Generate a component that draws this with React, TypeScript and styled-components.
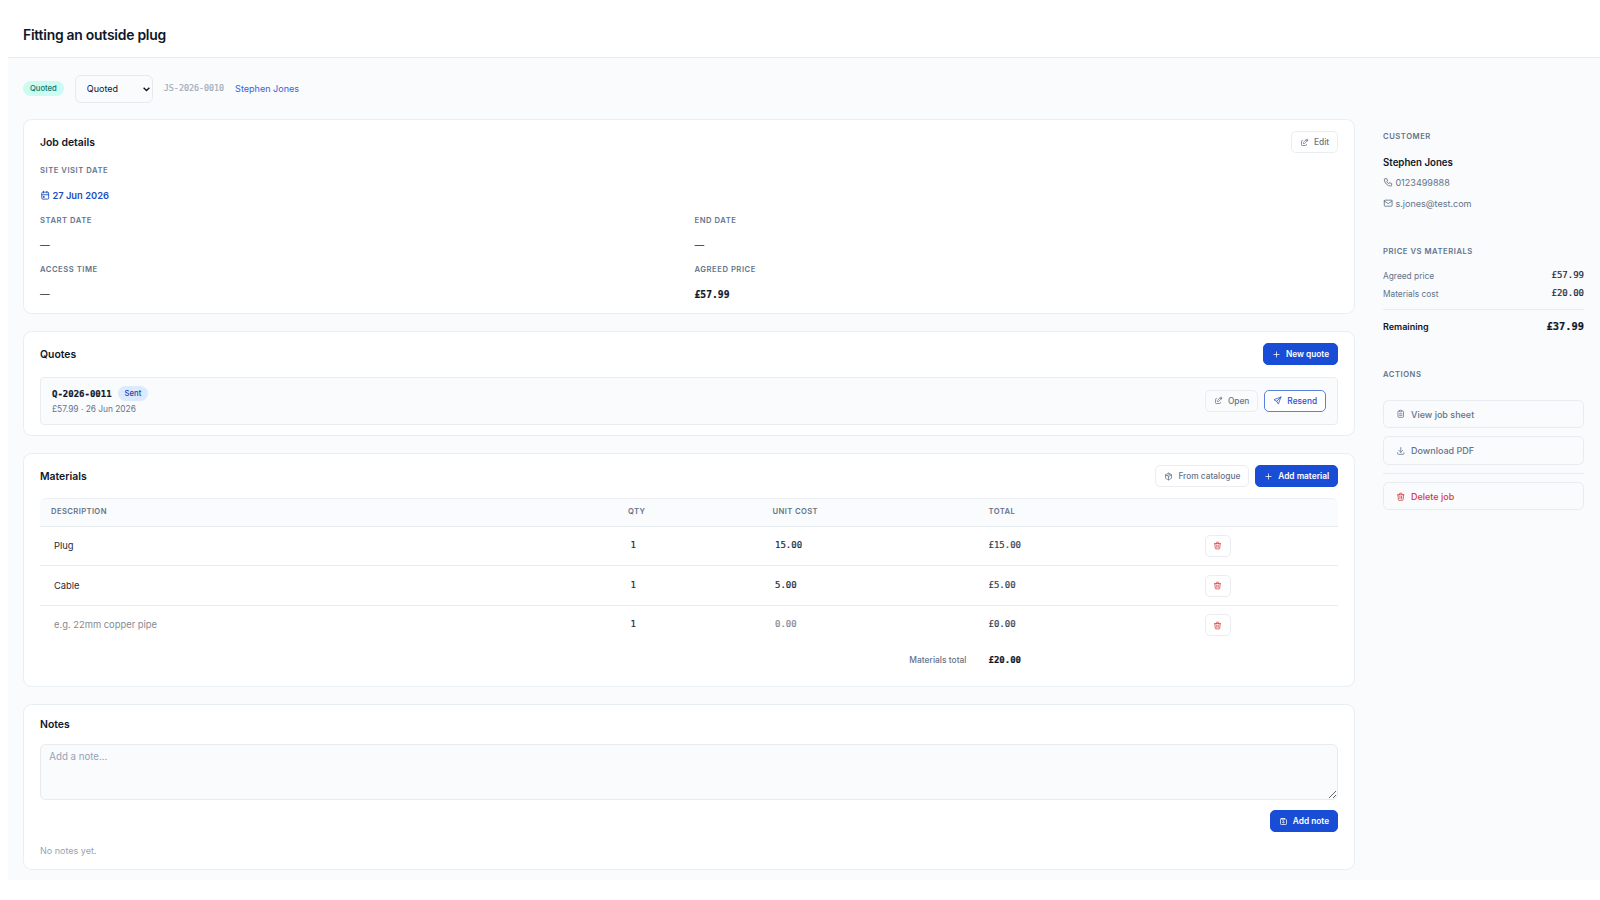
import React from "react";
import styled, { createGlobalStyle, css } from "styled-components";
import {
  TbCalendarEvent,
  TbClipboardText,
  TbDeviceFloppy,
  TbDownload,
  TbEdit,
  TbMail,
  TbPackage,
  TbPhone,
  TbPlus,
  TbSend,
  TbTrash,
} from "react-icons/tb";

const GlobalStyle = createGlobalStyle`
  *, *::before, *::after { box-sizing: border-box; }
  body {
    margin: 0;
    background: #fff;
    color: #0f172a;
    font-family: Inter, "Liberation Sans", sans-serif;
    font-size: 9px;
  }
  button, input, select, textarea { font-family: inherit; }
  svg { flex: none; display: block; }
`;

const mono = css`
  font-family: "DejaVu Sans Mono", "Liberation Mono", monospace;
  -webkit-text-stroke: 0.2px currentColor;
`;

const Page = styled.div`
  margin-left: 8px;
  height: 880px;
  background: #f9fbfd;
`;

const TopBar = styled.header`
  height: 58px;
  padding: 13px 15px 0;
  display: flex;
  align-items: center;
  background: #fff;
  border-bottom: 1px solid #e8ecf1;
`;

const PageTitle = styled.h1`
  margin: 0;
  font-size: 13.9px;
  font-weight: 600;
  letter-spacing: -0.017em;
`;

const StatusRow = styled.div`
  height: 61px;
  padding: 0 15px;
  display: flex;
  align-items: center;
  gap: 11px;
`;

const Badge = styled.span<{ $tone: "teal" | "blue" }>`
  height: 15.5px;
  padding: 0 7px;
  display: inline-flex;
  align-items: center;
  border-radius: 8px;
  font-size: 7.65px;
  font-weight: 500;
  background: ${(p) => (p.$tone === "teal" ? "#ccfbf1" : "#dbeafe")};
  color: ${(p) => (p.$tone === "teal" ? "#0f766e" : "#1e40af")};
`;

const SelectWrap = styled.div`
  position: relative;
  width: 78px;
  height: 28px;

  svg {
    position: absolute;
    right: 3px;
    top: 12px;
    pointer-events: none;
  }
`;

const Select = styled.select`
  width: 100%;
  height: 100%;
  padding: 0 11px;
  appearance: none;
  border: 1px solid #e6eaef;
  border-radius: 6px;
  background: #fafbfd;
  color: #0f172a;
  font-size: 9px;
`;

const JobRef = styled.span`
  ${mono}
  margin-bottom: 2px;
  font-size: 8.35px;
  color: #a3adba;
`;

const CustomerLink = styled.a`
  color: #3b62d6;
  font-size: 9.05px;
`;

const Body = styled.div`
  padding-left: 15px;
  display: grid;
  grid-template-columns: 1332px 201px;
  column-gap: 28px;
`;

const Main = styled.main`
  display: flex;
  flex-direction: column;
  gap: 17px;
`;

const Card = styled.section<{ $height: number }>`
  height: ${(p) => p.$height}px;
  padding: 11px 16px 0;
  border: 1px solid #e9eef3;
  border-radius: 8.5px;
  background: #fff;
`;

const CardHead = styled.div<{ $height?: number }>`
  height: ${(p) => p.$height ?? 22}px;
  display: flex;
  align-items: center;
  justify-content: space-between;
`;

const CardTitle = styled.h2`
  margin: 0;
  font-size: 10.4px;
  font-weight: 600;
`;

const ButtonGroup = styled.div`
  display: flex;
  gap: 6px;
`;

const variants = {
  ghost: css`
    background: #fff;
    border-color: #eaeef3;
    color: #64748b;
  `,
  soft: css`
    background: #fafbfd;
    border-color: #e9edf2;
    color: #64748b;
  `,
  primary: css`
    background: #1a4dd6;
    border-color: #1a4dd6;
    color: #fff;
    font-weight: 600;
    font-size: 8.3px;
  `,
  outline: css`
    background: #fff;
    border-color: #5b7fdc;
    color: #1d4ed8;
  `,
};

const Button = styled.button<{ $variant: keyof typeof variants }>`
  height: 22px;
  padding: 0 7.9px;
  display: inline-flex;
  align-items: center;
  gap: 5.2px;
  border: 1px solid;
  border-radius: 5px;
  font-size: 8.35px;
  font-weight: 500;
  white-space: nowrap;
  ${(p) => variants[p.$variant]}

  svg {
    width: 9px;
    height: 9px;
  }
`;

const DeleteButton = styled(Button)`
  width: 26px;
  padding: 0;
  justify-content: center;
  color: #d83a3a;
`;

const Label = styled.div`
  height: 14px;
  line-height: 14px;
  font-size: 7.65px;
  font-weight: 600;
  letter-spacing: 0.07em;
  text-transform: uppercase;
  color: #64748b;
`;

const DetailGrid = styled.div`
  margin-top: 11px;
  display: grid;
  grid-template-columns: 654.5px 1fr;
  grid-auto-rows: 49.5px;
`;

const Detail = styled.div<{ $wide?: boolean }>`
  grid-column: ${(p) => (p.$wide ? "1 / -1" : "auto")};
`;

const DetailValue = styled.div`
  margin-top: 10px;
  height: 15px;
  display: flex;
  align-items: center;
  font-size: 9.7px;
  color: #1e293b;
`;

const VisitDate = styled(DetailValue)`
  gap: 2px;
  font-size: 9.35px;
  font-weight: 600;
  color: #1d4ebf;

  svg { width: 10.4px; height: 10.4px; }
`;

const AgreedPrice = styled(DetailValue)`
  ${mono}
  font-weight: 700;
  color: #0f172a;
`;

const QuoteItem = styled.div`
  margin-top: 11.5px;
  height: 48px;
  padding: 0 11px;
  display: flex;
  align-items: center;
  justify-content: space-between;
  border: 1px solid #e9edf2;
  border-radius: 4px;
  background: #f9fbfd;
`;

const QuoteTop = styled.div`
  display: flex;
  align-items: center;
  gap: 6px;
`;

const QuoteNumber = styled.span`
  ${mono}
  font-size: 9px;
  font-weight: 700;
`;

const QuoteMeta = styled.div`
  margin-top: 2px;
  line-height: 12px;
  font-size: 8.35px;
  color: #64748b;
`;

const columns = css`
  display: grid;
  grid-template-columns: 577px 144.5px 216px 216px 1fr;
  align-items: center;
`;

const TableHead = styled.div`
  ${columns}
  margin-top: 11px;
  height: 28.5px;
  padding-bottom: 1px;
  border-top: 1px solid #eceff3;
  border-bottom: 1px solid #e6ebf0;
  border-radius: 7px 7px 0 0;
  background: #f9fbfd;
`;

const HeadCell = styled.div`
  padding-left: 11px;
  font-size: 7.65px;
  font-weight: 600;
  letter-spacing: 0.05em;
  color: #64748b;
`;

const TableRow = styled.div<{ $last?: boolean }>`
  ${columns}
  height: 39.7px;
  border-bottom: 1px solid ${(p) => (p.$last ? "transparent" : "#e8ecf1")};
`;

const Cell = styled.div`
  padding-left: 11px;
`;

const CellInput = styled.input<{ $mono?: boolean }>`
  width: 80%;
  padding: 0;
  margin: 0 0 ${(p) => (p.$mono ? 1.5 : 1)}px ${(p) => (p.$mono ? 2.5 : 3)}px;
  display: block;
  border: 0;
  outline: 0;
  background: transparent;
  color: #1e293b;
  font-size: ${(p) => (p.$mono ? 9 : 9.4)}px;
  ${(p) => p.$mono && mono}

  &::placeholder { color: #858a92; opacity: 1; }
`;

const Amount = styled.div`
  ${mono}
  padding: 0 0 1.5px 11px;
  font-size: 9px;
  color: #334155;
`;

const TotalRow = styled.div`
  ${columns}
  height: 28.5px;
`;

const TotalLabel = styled.div`
  grid-column: 1 / 4;
  padding-right: 11px;
  text-align: right;
  font-size: 8.45px;
  font-weight: 500;
  color: #64748b;
`;

const TotalAmount = styled(Amount)`
  padding-bottom: 0;
  font-weight: 700;
  color: #0f172a;
`;

const NoteArea = styled.textarea`
  display: block;
  margin-top: 11px;
  width: 100%;
  height: 56px;
  padding: 5px 8.3px;
  border: 1px solid #e6ebf0;
  border-radius: 6px;
  outline: 0;
  resize: vertical;
  background: #f9fbfd;
  font-size: 9.7px;
  line-height: 13px;

  &::placeholder { color: #94a3b8; opacity: 1; }
`;

const NoteActions = styled.div`
  margin-top: 10px;
  display: flex;
  justify-content: flex-end;
`;

const EmptyNotes = styled.p`
  margin: 12px 0 0;
  line-height: 14px;
  font-size: 9px;
  color: #94a3b8;
`;

const Sidebar = styled.aside`
  padding-top: 11px;
`;

const SideSection = styled.section<{ $height: number }>`
  height: ${(p) => p.$height}px;
`;

const CustomerName = styled.div`
  margin-top: 10.5px;
  line-height: 16px;
  font-size: 9.7px;
  font-weight: 600;
`;

const Contact = styled.div`
  height: 21.2px;
  display: flex;
  align-items: center;
  gap: 2px;
  font-size: 9.05px;
  color: #64748b;

  svg { width: 10.4px; height: 10.4px; margin-top: -1px; }
`;

const Contacts = styled.div`
  margin-top: 1.5px;
`;

const PriceList = styled.div`
  margin: 8px 0 6.5px;
`;

const PriceLine = styled.div`
  height: 17.7px;
  display: flex;
  align-items: center;
  justify-content: space-between;
  font-size: 8.35px;
  color: #64748b;
`;

const PriceValue = styled.span`
  ${mono}
  font-size: 9px;
  color: #1e293b;
  padding-bottom: 1.5px;
`;

const Rule = styled.div`
  height: 1px;
  background: #e8ecf1;
`;

const Remaining = styled.div`
  height: 34px;
  display: flex;
  align-items: center;
  justify-content: space-between;
  font-weight: 600;
  font-size: 9px;
`;

const RemainingValue = styled.span`
  ${mono}
  padding-bottom: 1.5px;
  font-size: 10.4px;
  font-weight: 700;
`;

const ActionList = styled.div`
  margin-top: 18.5px;
  display: flex;
  flex-direction: column;
  gap: 8.3px;
`;

const ActionButton = styled.button<{ $danger?: boolean }>`
  height: 28.2px;
  padding: 0 12px;
  display: flex;
  align-items: center;
  gap: 5.5px;
  border: 1px solid #e8ecf1;
  border-radius: 5.5px;
  background: #fafbfd;
  font-size: 9px;
  font-weight: 500;
  color: ${(p) => (p.$danger ? "#d83a3a" : "#64748b")};

  svg { width: 9.5px; height: 9.5px; }
`;

type Material = { id: number; description: string; qty: string; cost: string; total: string };

const materials: Material[] = [
  { id: 1, description: "Plug", qty: "1", cost: "15.00", total: "£15.00" },
  { id: 2, description: "Cable", qty: "1", cost: "5.00", total: "£5.00" },
  { id: 3, description: "", qty: "1", cost: "", total: "£0.00" },
];

export default function App() {
  return (
    <>
      <GlobalStyle />
      <Page>
        <TopBar>
          <PageTitle>Fitting an outside plug</PageTitle>
        </TopBar>
        <StatusRow>
          <Badge $tone="teal">Quoted</Badge>
          <SelectWrap>
            <Select defaultValue="quoted">
              <option value="quoted">Quoted</option>
            </Select>
            <svg width="7" height="5" viewBox="0 0 7 5" fill="none" stroke="#0f172a" strokeWidth="1.4">
              <path d="M0.6 0.8 L3.5 3.6 L6.4 0.8" />
            </svg>
          </SelectWrap>
          <JobRef>JS-2026-0010</JobRef>
          <CustomerLink>Stephen Jones</CustomerLink>
        </StatusRow>
        <Body>
          <Main>
            <Card $height={195}>
              <CardHead>
                <CardTitle>Job details</CardTitle>
                <Button $variant="ghost"><TbEdit />Edit</Button>
              </CardHead>
              <DetailGrid>
                <Detail $wide>
                  <Label>Site visit date</Label>
                  <VisitDate><TbCalendarEvent />27 Jun 2026</VisitDate>
                </Detail>
                <Detail>
                  <Label>Start date</Label>
                  <DetailValue>—</DetailValue>
                </Detail>
                <Detail>
                  <Label>End date</Label>
                  <DetailValue>—</DetailValue>
                </Detail>
                <Detail>
                  <Label>Access time</Label>
                  <DetailValue>—</DetailValue>
                </Detail>
                <Detail>
                  <Label>Agreed price</Label>
                  <AgreedPrice>£57.99</AgreedPrice>
                </Detail>
              </DetailGrid>
            </Card>

            <Card $height={105}>
              <CardHead>
                <CardTitle>Quotes</CardTitle>
                <Button $variant="primary"><TbPlus />New quote</Button>
              </CardHead>
              <QuoteItem>
                <div>
                  <QuoteTop>
                    <QuoteNumber>Q-2026-0011</QuoteNumber>
                    <Badge $tone="blue">Sent</Badge>
                  </QuoteTop>
                  <QuoteMeta>£57.99 · 26 Jun 2026</QuoteMeta>
                </div>
                <ButtonGroup>
                  <Button $variant="soft"><TbEdit />Open</Button>
                  <Button $variant="outline"><TbSend />Resend</Button>
                </ButtonGroup>
              </QuoteItem>
            </Card>

            <Card $height={234}>
              <CardHead>
                <CardTitle>Materials</CardTitle>
                <ButtonGroup>
                  <Button $variant="ghost"><TbPackage />From catalogue</Button>
                  <Button $variant="primary"><TbPlus />Add material</Button>
                </ButtonGroup>
              </CardHead>
              <TableHead>
                <HeadCell>DESCRIPTION</HeadCell>
                <HeadCell>QTY</HeadCell>
                <HeadCell>UNIT COST</HeadCell>
                <HeadCell>TOTAL</HeadCell>
              </TableHead>
              {materials.map((m, i) => (
                <TableRow key={m.id} $last={i === materials.length - 1}>
                  <Cell><CellInput defaultValue={m.description} placeholder="e.g. 22mm copper pipe" /></Cell>
                  <Cell><CellInput $mono defaultValue={m.qty} /></Cell>
                  <Cell><CellInput $mono defaultValue={m.cost} placeholder="0.00" /></Cell>
                  <Amount>{m.total}</Amount>
                  <Cell><DeleteButton $variant="ghost" aria-label="Delete"><TbTrash /></DeleteButton></Cell>
                </TableRow>
              ))}
              <TotalRow>
                <TotalLabel>Materials total</TotalLabel>
                <TotalAmount>£20.00</TotalAmount>
              </TotalRow>
            </Card>

            <Card $height={166}>
              <CardHead $height={17}>
                <CardTitle>Notes</CardTitle>
              </CardHead>
              <NoteArea placeholder="Add a note..." />
              <NoteActions>
                <Button $variant="primary"><TbDeviceFloppy />Add note</Button>
              </NoteActions>
              <EmptyNotes>No notes yet.</EmptyNotes>
            </Card>
          </Main>

          <Sidebar>
            <SideSection $height={115}>
              <Label>Customer</Label>
              <CustomerName>Stephen Jones</CustomerName>
              <Contacts>
                <Contact><TbPhone />0123499888</Contact>
                <Contact><TbMail />s.jones@test.com</Contact>
              </Contacts>
            </SideSection>
            <SideSection $height={122.5}>
              <Label>Price vs materials</Label>
              <PriceList>
                <PriceLine>Agreed price<PriceValue>£57.99</PriceValue></PriceLine>
                <PriceLine>Materials cost<PriceValue>£20.00</PriceValue></PriceLine>
              </PriceList>
              <Rule />
              <Remaining>Remaining<RemainingValue>£37.99</RemainingValue></Remaining>
            </SideSection>
            <SideSection $height={150}>
              <Label>Actions</Label>
              <ActionList>
                <ActionButton><TbClipboardText />View job sheet</ActionButton>
                <ActionButton><TbDownload />Download PDF</ActionButton>
                <Rule />
                <ActionButton $danger><TbTrash />Delete job</ActionButton>
              </ActionList>
            </SideSection>
          </Sidebar>
        </Body>
      </Page>
    </>
  );
}
